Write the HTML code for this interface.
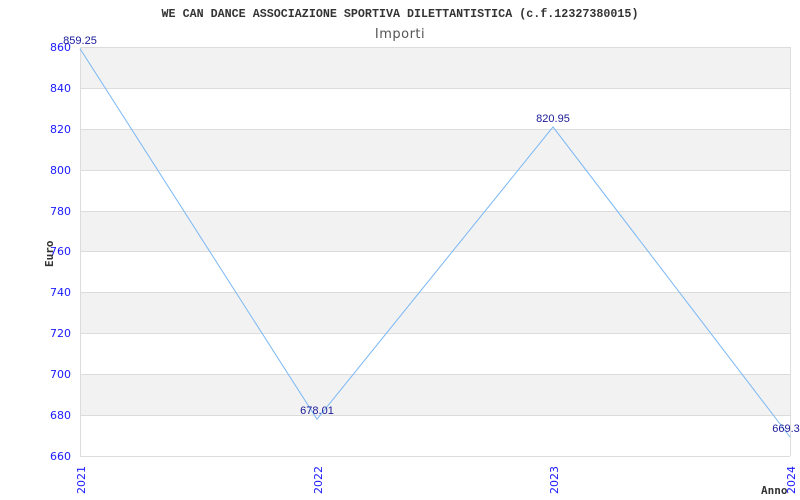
<!DOCTYPE html>
<html><head><meta charset="utf-8"><style>body{margin:0;background:#fff}svg{display:block}</style></head>
<body>
<svg width="800" height="500" xmlns="http://www.w3.org/2000/svg">
<rect width="800" height="500" fill="#fff"/>
<text x="400" y="17" text-anchor="middle" font-family="Liberation Mono, monospace" font-weight="bold" font-size="11.7" fill="#333">WE CAN DANCE ASSOCIAZIONE SPORTIVA DILETTANTISTICA (c.f.12327380015)</text>
<text x="400" y="38" text-anchor="middle" font-family="DejaVu Sans, sans-serif" font-size="13" fill="#555" letter-spacing="0.5">Importi</text>
<g fill="#f2f2f2">
<rect x="80" y="47" width="710" height="41"/>
<rect x="80" y="129" width="710" height="41"/>
<rect x="80" y="211" width="710" height="40"/>
<rect x="80" y="292" width="710" height="41"/>
<rect x="80" y="374" width="710" height="41"/>
</g>
<g stroke="#dcdcdc" stroke-width="1">
<line x1="80" y1="47.5" x2="790" y2="47.5"/><line x1="80" y1="88.5" x2="790" y2="88.5"/>
<line x1="80" y1="129.5" x2="790" y2="129.5"/><line x1="80" y1="170.5" x2="790" y2="170.5"/>
<line x1="80" y1="211.5" x2="790" y2="211.5"/><line x1="80" y1="251.5" x2="790" y2="251.5"/>
<line x1="80" y1="292.5" x2="790" y2="292.5"/><line x1="80" y1="333.5" x2="790" y2="333.5"/>
<line x1="80" y1="374.5" x2="790" y2="374.5"/><line x1="80" y1="415.5" x2="790" y2="415.5"/>
<line x1="80" y1="456.5" x2="790" y2="456.5"/>
<line x1="80.5" y1="47" x2="80.5" y2="456"/><line x1="790.5" y1="47" x2="790.5" y2="456"/>
</g>
<g font-family="DejaVu Sans, sans-serif" font-size="11" fill="#1a1aff" text-anchor="end">
<text x="71" y="51">860</text><text x="71" y="92">840</text><text x="71" y="133">820</text>
<text x="71" y="174">800</text><text x="71" y="215">780</text><text x="71" y="255">760</text>
<text x="71" y="296">740</text><text x="71" y="337">720</text><text x="71" y="378">700</text>
<text x="71" y="419">680</text><text x="71" y="460">660</text>
</g>
<g font-family="DejaVu Sans, sans-serif" font-size="11" fill="#1a1aff" text-anchor="end">
<text transform="translate(85,466) rotate(-90)">2021</text>
<text transform="translate(322,466) rotate(-90)">2022</text>
<text transform="translate(558,466) rotate(-90)">2023</text>
<text transform="translate(795,466) rotate(-90)">2024</text>
</g>
<text transform="translate(53,267) rotate(-90)" font-family="DejaVu Sans Mono, monospace" font-weight="bold" font-size="11" fill="#333">Euro</text>
<text x="761" y="494" font-family="DejaVu Sans Mono, monospace" font-weight="bold" font-size="11" fill="#333">Anno</text>
<polyline points="80,48.6 317,419.2 553,126.9 790,437" fill="none" stroke="#7ab8f5" stroke-width="1"/>
<g font-family="Liberation Sans, sans-serif" font-size="11" fill="#1a1a99" text-anchor="middle">
<text x="80" y="44">859.25</text>
<text x="317" y="414">678.01</text>
<text x="553" y="122">820.95</text>
<text x="786" y="432">669.3</text>
</g>
</svg>
</body></html>
